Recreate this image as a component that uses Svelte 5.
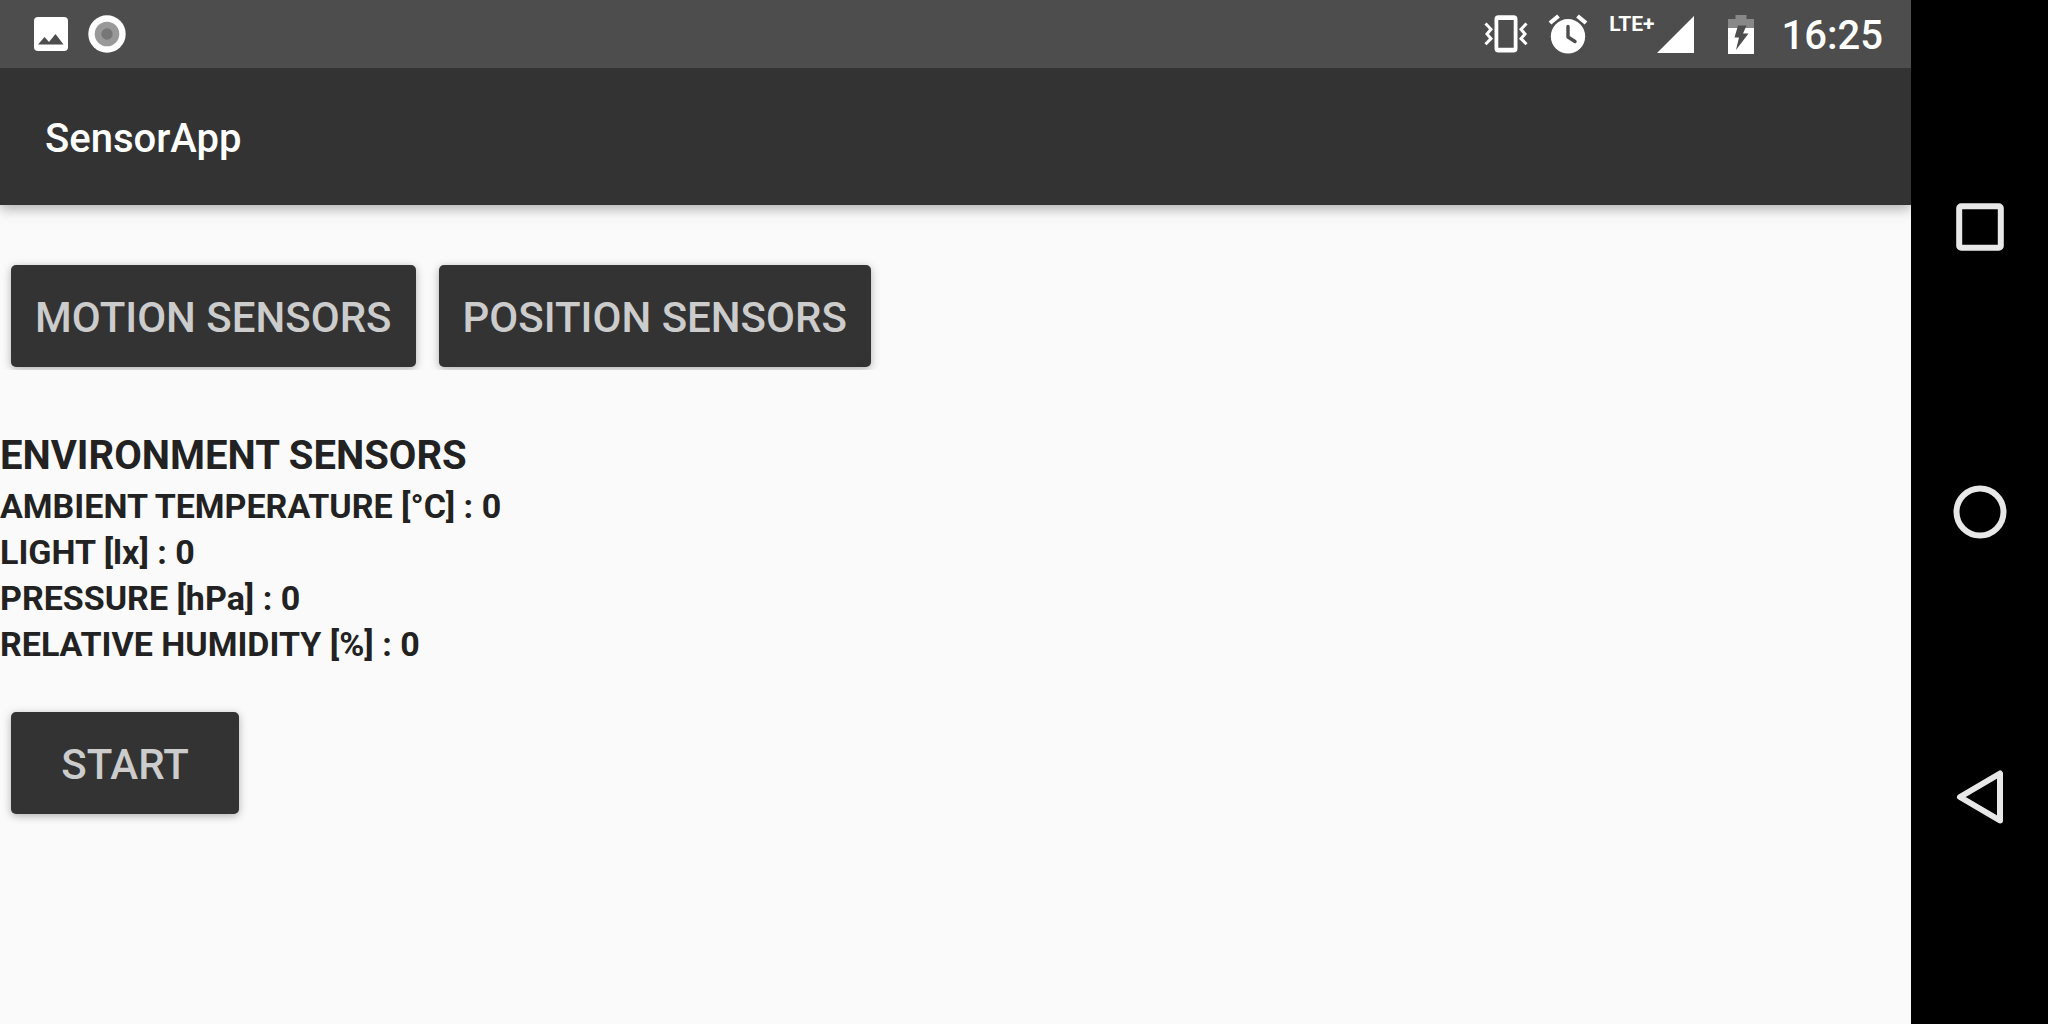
<script>
  const readings = [
    { label: 'AMBIENT TEMPERATURE [°C]', value: 0 },
    { label: 'LIGHT [lx]', value: 0 },
    { label: 'PRESSURE [hPa]', value: 0 },
    { label: 'RELATIVE HUMIDITY [%]', value: 0 }
  ];
</script>

<div class="screen">
  <div class="app">
    <div class="status">
      <div class="group notices">
        <svg class="picture" viewBox="0 0 34 34" aria-hidden="true">
          <path fill="#fff" d="M4 0H30a4 4 0 0 1 4 4V30a4 4 0 0 1-4 4H4a4 4 0 0 1-4-4V4a4 4 0 0 1 4-4Z" />
          <path fill="#4d4d4d" d="M4 27.5 10.5 20 15 25 21.500 17 29.500 27.500Z" />
        </svg>
        <svg class="disc" viewBox="0 0 38 38" aria-hidden="true">
          <circle cx="19" cy="19" r="18.700" fill="#fff" />
          <circle cx="19" cy="19" r="12.300" fill="#999" />
          <circle cx="19" cy="19" r="5.700" fill="#777" />
        </svg>
      </div>
      <div class="group system">
        <svg class="vibrate" viewBox="0 0 44 38" aria-hidden="true">
          <path fill="#fff" fill-rule="evenodd" d="M14.500 0.200H29.500a4 4 0 0 1 4 4V33.500a4 4 0 0 1-4 4H14.500a4 4 0 0 1-4-4V4.200a4 4 0 0 1 4-4ZM14.300 5V32.800H29.700V5Z" />
          <path fill="none" stroke="#fff" stroke-width="3" d="M1.500 8.500 7 14.200 3 19 7 23.600 1.500 29.300M42.500 8.500 37 14.200 41 19 37 23.600 42.500 29.300" />
        </svg>
        <svg class="alarm" viewBox="0 0 40 40" aria-hidden="true">
          <circle cx="20" cy="22.300" r="17.200" fill="#fff" />
          <path fill="none" stroke="#fff" stroke-width="4.200" d="M2 9 10.500 2M38 9 29.500 2" />
          <path fill="none" stroke="#4d4d4d" stroke-width="3.400" stroke-linecap="round" stroke-linejoin="round" d="M20 12.500V23L27 27.500" />
        </svg>
        <div class="network">
          <span>LTE+</span>
          <svg class="signal" viewBox="0 0 37 37" aria-hidden="true"><path fill="#fff" d="M37 0V37H0Z" /></svg>
        </div>
        <svg class="battery" viewBox="0 0 26 39" aria-hidden="true">
          <path fill="#888" d="M7.500 0H18.500V4H26V13H0V4H7.500Z" />
          <path fill="#fff" d="M0 13H26V39H0Z" />
          <path fill="#4d4d4d" d="M10 10.500H18.500L15 18.500H20.500L8 35 11 22.500H6.500Z" />
        </svg>
        <time>16:25</time>
      </div>
    </div>
    <header><h1>SensorApp</h1></header>
    <main>
      <div class="links">
        <button type="button">MOTION SENSORS</button>
        <button type="button">POSITION SENSORS</button>
      </div>
      <section>
        <h2>ENVIRONMENT SENSORS</h2>
        {#each readings as reading}
          <p>{reading.label} : {reading.value}</p>
        {/each}
      </section>
      <button class="start" type="button">START</button>
    </main>
  </div>
  <nav aria-label="System">
    <button type="button" aria-label="Recent apps">
      <svg viewBox="0 0 56 56"><rect x="7.200" y="7.200" width="41.600" height="41.600" rx="2" /></svg>
    </button>
    <button type="button" aria-label="Home">
      <svg viewBox="0 0 56 56"><circle cx="28" cy="28" r="23.500" /></svg>
    </button>
    <button type="button" aria-label="Back">
      <svg viewBox="0 0 56 56"><path d="M48 4.500V51.500L8 28Z" /></svg>
    </button>
  </nav>
</div>

<style>
  :global(body) {
    margin: 0;
  }
  .screen {
    display: flex;
    min-height: 100vh;
    background: #fafafa;
    font-family: Roboto, 'Liberation Sans', sans-serif;
  }
  .app {
    flex: 1;
    min-width: 0;
  }
  .status {
    display: flex;
    justify-content: space-between;
    height: 68px;
    padding: 0 28px 0 34px;
    background: #4d4d4d;
    color: #fff;
  }
  .group {
    display: flex;
    align-items: center;
  }
  .notices {
    gap: 20px;
  }
  svg {
    display: block;
  }
  .picture {
    width: 34px;
    height: 34px;
  }
  .disc {
    width: 38px;
    height: 38px;
  }
  .vibrate {
    width: 44px;
    height: 38px;
    margin-right: 20px;
  }
  .alarm {
    width: 40px;
    height: 40px;
    margin-right: 21px;
  }
  .network {
    display: flex;
    align-items: flex-start;
    gap: 2px;
    margin-right: 34px;
  }
  .network span {
    font-size: 21px;
    line-height: 16px;
    font-weight: 700;
  }
  .signal {
    width: 37px;
    height: 37px;
  }
  .battery {
    width: 26px;
    height: 39px;
    margin-right: 28px;
  }
  time {
    padding-top: 4px;
    font-size: 40px;
    line-height: 48px;
    font-weight: 500;
  }
  header {
    position: relative;
    box-sizing: border-box;
    display: flex;
    align-items: center;
    height: 137px;
    padding: 4px 45px 0;
    background: #333;
    box-shadow: 0 4px 12px rgba(0, 0, 0, 0.3);
    clip-path: inset(0 0 -24px 0);
  }
  h1 {
    margin: 0;
    color: #fff;
    font-size: 40px;
    line-height: 48px;
    font-weight: 500;
  }
  main {
    padding-top: 60px;
  }
  .links {
    display: flex;
    gap: 23px;
    padding-left: 11px;
    clip-path: inset(-12px -12px -3px 0);
  }
  main button {
    height: 102px;
    padding: 4px 24px 0;
    border: 0;
    border-radius: 5px;
    background: #333;
    box-shadow: 0 2px 8px rgba(0, 0, 0, 0.3);
    color: #ccc;
    font-family: inherit;
    font-size: 42px;
    line-height: 50px;
    font-weight: 500;
  }
  section {
    margin: 62px 0 45px;
    color: #222;
    font-weight: 700;
  }
  h2 {
    margin: 0;
    font-size: 40px;
    line-height: 54px;
  }
  p {
    margin: 0;
    font-size: 34px;
    line-height: 46px;
  }
  .start {
    min-width: 228px;
    margin-left: 11px;
  }
  nav {
    position: relative;
    display: flex;
    flex-direction: column;
    justify-content: center;
    flex: 0 0 137px;
    height: 100vh;
    background: #000;
  }
  nav button {
    display: grid;
    place-items: center;
    flex: 0 0 27.8%;
    padding: 0;
    border: 0;
    background: none;
  }
  nav svg {
    width: 56px;
    height: 56px;
    fill: none;
    stroke: #e8e8e8;
    stroke-width: 6px;
    stroke-linejoin: round;
  }
</style>
